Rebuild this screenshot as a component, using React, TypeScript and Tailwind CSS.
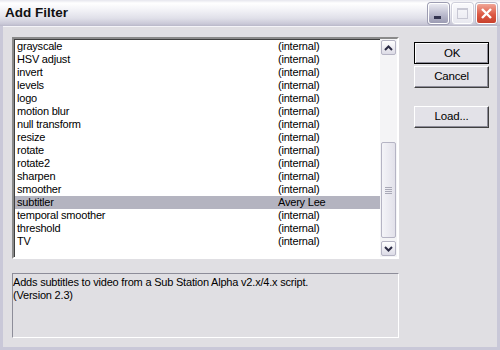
import React from "react";

const filters: [string, string][] = [
  ["grayscale", "(internal)"],
  ["HSV adjust", "(internal)"],
  ["invert", "(internal)"],
  ["levels", "(internal)"],
  ["logo", "(internal)"],
  ["motion blur", "(internal)"],
  ["null transform", "(internal)"],
  ["resize", "(internal)"],
  ["rotate", "(internal)"],
  ["rotate2", "(internal)"],
  ["sharpen", "(internal)"],
  ["smoother", "(internal)"],
  ["subtitler", "Avery Lee"],
  ["temporal smoother", "(internal)"],
  ["threshold", "(internal)"],
  ["TV", "(internal)"],
];

function Chevron({ down }: { down?: boolean }) {
  return (
    <svg width="9" height="6" viewBox="0 0 9 6">
      <path
        d={down ? "M1 1 L4.5 4.5 L8 1" : "M1 5 L4.5 1.5 L8 5"}
        fill="none"
        stroke="#2b2b44"
        strokeWidth="2"
      />
    </svg>
  );
}

function ScrollBtn({ down }: { down?: boolean }) {
  return (
    <div className="h-[17px] w-[17px] p-[1px]">
      <div className="flex h-full w-full items-center justify-center rounded-[2px] border border-[#b5b4c4] bg-[linear-gradient(#ffffff,#dcdbe6)]">
        <Chevron down={down} />
      </div>
    </div>
  );
}

function Button({ label, def }: { label: string; def?: boolean }) {
  return (
    <div
      className={`h-[22px] w-[75px] ${def ? "border border-black" : ""}`}
    >
      <div
        className={`flex h-full w-full items-center justify-center border-l border-t border-white bg-[#e3e2e8] text-[11.5px] text-black ${
          def
            ? "shadow-[inset_-1px_-1px_0_#8d8c99]"
            : "border-b border-r border-b-[#404040] border-r-[#404040] shadow-[inset_-1px_-1px_0_#8d8c99]"
        }`}
      >
        {label}
      </div>
    </div>
  );
}

export default function App() {
  return (
    <div className="flex h-[350px] w-[500px] flex-col border-b-[3px] border-l-[3px] border-r-[3px] border-b-[#c9c8d8] border-l-[#c9c8d8] border-r-[#c9c8d8] bg-[#e0dfe3] font-['Liberation_Sans',Arial,sans-serif] text-[11px] tracking-[-0.2px] text-black">
      {/* title bar */}
      <div className="-mx-[3px] flex h-[26px] shrink-0 items-center justify-between bg-[linear-gradient(#e6e6ee_0%,#ffffff_12%,#f4f4f8_35%,#e0e0e9_70%,#c9c8d7_92%,#b9b8c9_100%)] pl-[5px] pr-[3px]">
        <div className="text-[13.5px] font-bold tracking-normal text-[#111]">Add Filter</div>
        <div className="flex gap-[3px]">
          <div className="relative h-[21px] w-[21px] rounded-[3px] border border-white bg-[linear-gradient(#e9e9f1,#b7b7cb_60%,#9c9cb3)] shadow-[0_0_0_1px_#9d9db2]">
            <div className="absolute bottom-[4px] left-[5px] h-[3px] w-[7px] bg-[#333450]" />
          </div>
          <div className="relative h-[21px] w-[21px] rounded-[3px] border border-white bg-[linear-gradient(#f9f9fc,#e9e9f0)] shadow-[0_0_0_1px_#cfcfdb]">
            <div className="absolute left-[4px] top-[4px] h-[11px] w-[11px] border border-t-2 border-[#c8c8d4]" />
          </div>
          <div className="relative flex h-[21px] w-[21px] items-center justify-center rounded-[3px] border border-white bg-[linear-gradient(#f0a697,#dd5a45_55%,#c8402c)] shadow-[0_0_0_1px_#b9b9c9]">
            <svg width="13" height="13" viewBox="0 0 13 13">
              <path d="M2 2 L11 11 M11 2 L2 11" stroke="#fff" strokeWidth="2.4" />
            </svg>
          </div>
        </div>
      </div>

      {/* body */}
      <div className="flex flex-1 flex-col border-t border-[#f4f4f8] pl-[9px] pr-[8px] pt-[10px]">
        <div className="flex">
          <div className="flex w-[387px] flex-col">
            {/* list box */}
            <div className="flex h-[222px] w-[387px] border-2 border-b-white border-l-[#8a8a8a] border-r-white border-t-[#8a8a8a] bg-white shadow-[inset_1px_1px_0_#404040]">
              <div className="flex-1 pl-[1px] pt-[1px]">
                {filters.map(([name, author]) => (
                  <div
                    key={name}
                    className={`flex h-[13px] items-center leading-[13px] ${
                      name === "subtitler" ? "bg-[#b4b4c0]" : ""
                    }`}
                  >
                    <div className="w-[263px] whitespace-nowrap pl-[2px]">
                      {name}
                    </div>
                    <div className="whitespace-nowrap">{author}</div>
                  </div>
                ))}
              </div>
              <div className="flex w-[17px] flex-col bg-[#f4f4f6]">
                <ScrollBtn />
                <div className="flex flex-1 flex-col pt-[86px]">
                  <div className="mx-[1px] flex h-[96px] items-center justify-center rounded-[2px] border border-[#b5b4c4] bg-[linear-gradient(90deg,#f4f4f8,#e2e1ea)]">
                    <div className="flex flex-col gap-[1px]">
                      <div className="h-[1px] w-[7px] bg-[#a9a9b7]" />
                      <div className="h-[1px] w-[7px] bg-[#a9a9b7]" />
                      <div className="h-[1px] w-[7px] bg-[#a9a9b7]" />
                      <div className="h-[1px] w-[7px] bg-[#a9a9b7]" />
                    </div>
                  </div>
                </div>
                <ScrollBtn down />
              </div>
            </div>

            {/* description */}
            <div className="mt-[14px] h-[65px] w-[387px] border border-b-white border-l-[#8d8d99] border-r-white border-t-[#8d8d99] pt-[2px] leading-[13px]">
              <div>Adds subtitles to video from a Sub Station Alpha v2.x/4.x script.</div>
              <div>(Version 2.3)</div>
            </div>
          </div>

          {/* buttons */}
          <div className="ml-[15px] flex flex-col pt-[5px]">
            <Button label="OK" def />
            <div className="h-[2px]" />
            <Button label="Cancel" />
            <div className="h-[18px]" />
            <Button label="Load..." />
          </div>
        </div>
      </div>
    </div>
  );
}
